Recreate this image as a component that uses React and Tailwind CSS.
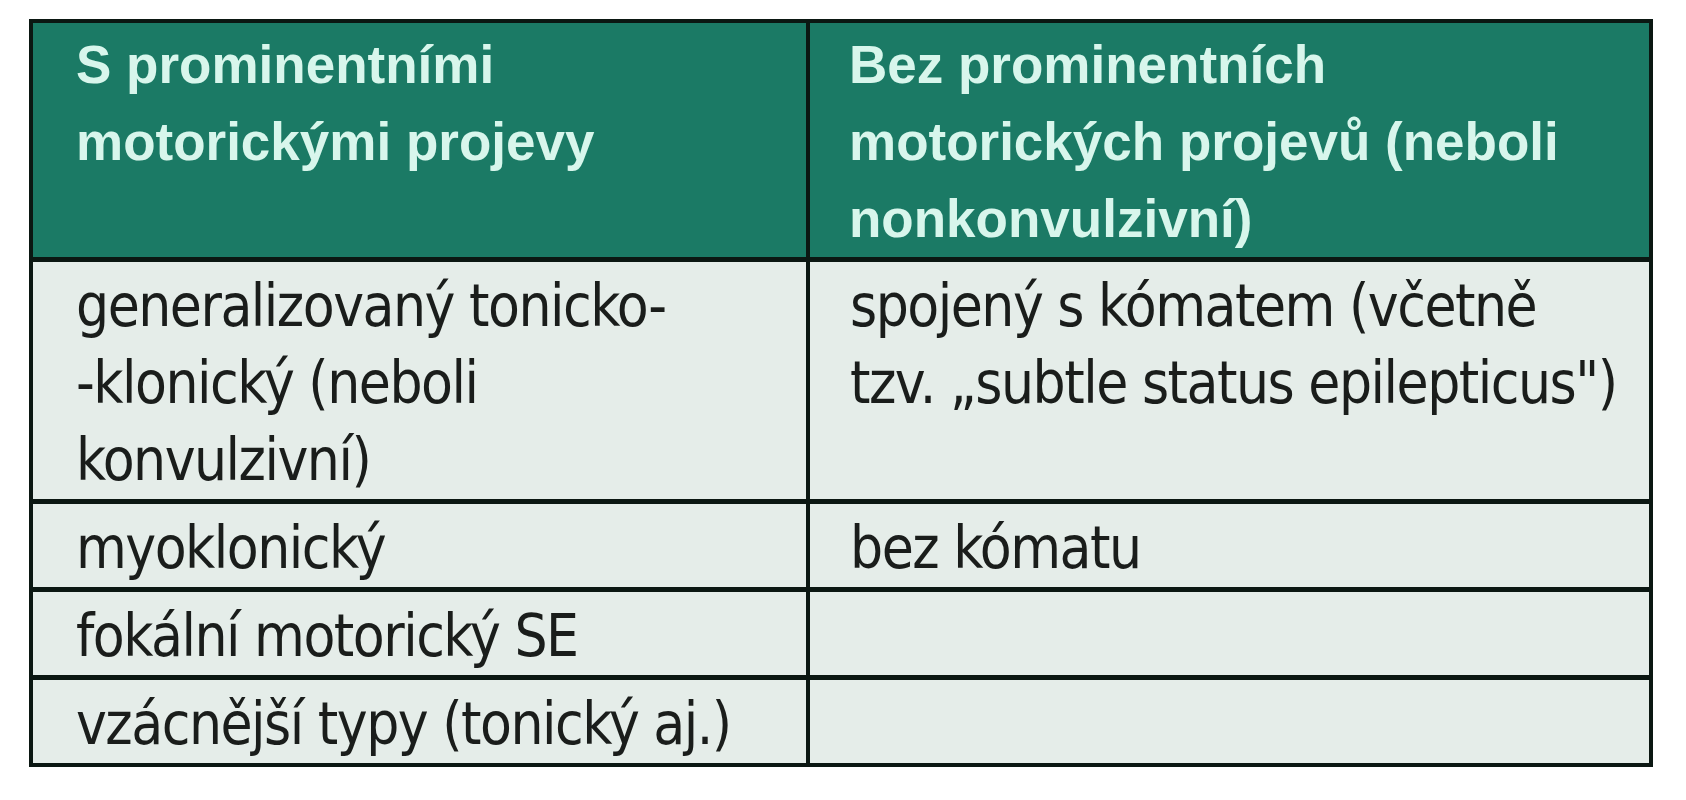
export default function App() {
  const rows = [
    {
      left: ['generalizovaný tonicko-', '-klonický (neboli', 'konvulzivní)'],
      right: ['spojený s kómatem (včetně', 'tzv. „subtle status epilepticus")'],
    },
    { left: ['myoklonický'], right: ['bez kómatu'] },
    { left: ['fokální motorický SE'], right: [] },
    { left: ['vzácnější typy (tonický aj.)'], right: [], last: true },
  ]

  const bodyFont = { fontFamily: '"DejaVu Sans Condensed", "DejaVu Sans", sans-serif' }

  return (
    <div className="min-h-[800px] w-[1686px] bg-white pt-[19px] pl-[29px]">
      <div className="w-[1624px] border-4 border-[#0b1712]">
        {/* header */}
        <div
          className="grid grid-cols-[777px_1fr] border-b-[5px] border-[#0b1712] bg-[#1b7a65] text-[53px] font-bold leading-[77px] text-[#d8f6ec]"
          style={{ fontFamily: '"Liberation Sans", Arial, sans-serif' }}
        >
          <div className="border-r-4 border-[#0b1712] pt-[3px] pl-[43px] whitespace-nowrap">
            S prominentními<br />motorickými projevy
          </div>
          <div className="pt-[3px] pl-[39px] whitespace-nowrap">
            Bez prominentních<br />motorických projevů (neboli<br />nonkonvulzivní)
          </div>
        </div>

        {/* body rows */}
        {rows.map((r, i) => (
          <div
            key={i}
            className={`grid grid-cols-[777px_1fr] bg-[#e5ede9] text-[58px] leading-[77px] tracking-[-1.5px] text-[#1a1d1b] ${
              r.last ? '' : 'border-b-[5px] border-[#0b1712]'
            }`}
            style={bodyFont}
          >
            <div className="border-r-4 border-[#0b1712] pt-[6px] pl-[43px] whitespace-nowrap">
              {r.left.map((l, j) => (
                <div key={j}>{l}</div>
              ))}
            </div>
            <div className="pt-[6px] pl-[40px] whitespace-nowrap">
              {r.right.map((l, j) => (
                <div key={j}>{l}</div>
              ))}
            </div>
          </div>
        ))}
      </div>
    </div>
  )
}
